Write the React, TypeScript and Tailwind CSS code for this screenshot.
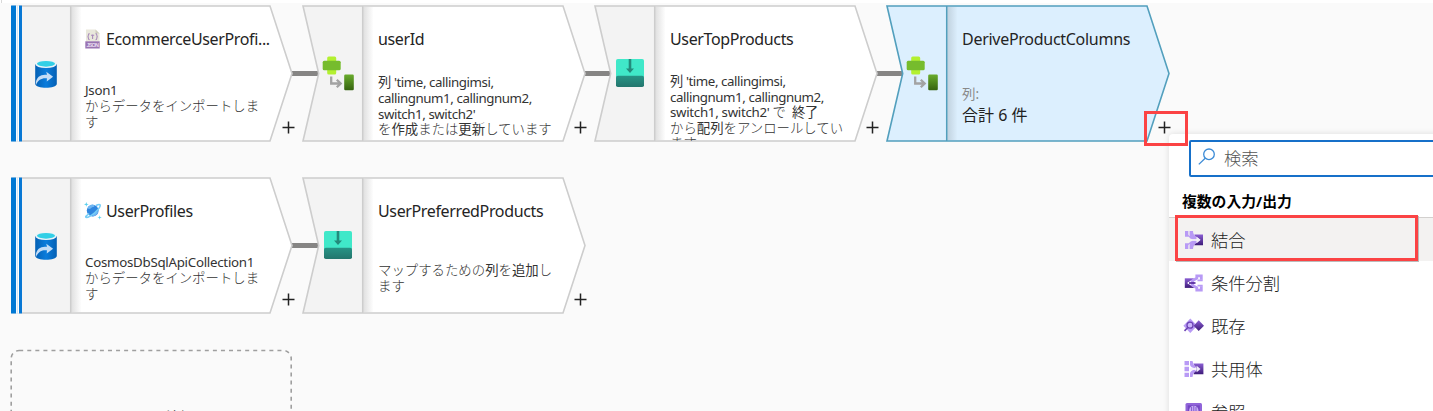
import type { ReactNode } from "react";

const FONT = "font-['Noto_Sans','Noto_Sans_CJK_JP',sans-serif]";

function SourceIcon() {
  return (
    <svg width="22" height="28" viewBox="0.8 0.3 22.4 28.6" preserveAspectRatio="none" className="mt-px">
      <defs>
        <linearGradient id="cyl" x1="0" x2="1">
          <stop offset="0" stopColor="#0460b4" />
          <stop offset=".5" stopColor="#0a7cdc" />
          <stop offset="1" stopColor="#0460b4" />
        </linearGradient>
      </defs>
      <path d="M1 4.5V24.5C1 30 23 30 23 24.5V4.5Z" fill="url(#cyl)" />
      <ellipse cx="12" cy="4.5" rx="11" ry="4" fill="#eaf3f8" />
      <ellipse cx="12" cy="4.2" rx="9.2" ry="2.9" fill="#32cfe6" />
      <path d="M1.7 23.5C2.2 17.5 7 14.5 13 15.4L12.3 12.2L19.2 17.3L12.8 22.3L12.9 19C8.5 18.3 4 20 1.7 26Z" fill="#c3dcf6" />
    </svg>
  );
}

function DeriveIcon() {
  return (
    <svg width="33" height="35" viewBox="0 0 33 35">
      <defs>
        <linearGradient id="dg" x1="0" x2="0" y1="0" y2="1">
          <stop offset="0" stopColor="#69ac2c" />
          <stop offset="1" stopColor="#35620f" />
        </linearGradient>
      </defs>
      <rect x="5.2" y="0.5" width="9" height="18" rx="1.5" fill="#b3f030" />
      <rect x="0.7" y="4.7" width="18" height="9.6" rx="1.5" fill="#76bc2d" />
      <path d="M9.2 20.5V27.5H18M14.8 23.7L18.7 27.5L14.8 31.3" fill="none" stroke="#a3a3a3" strokeWidth="2.3" />
      <rect x="22.2" y="18.5" width="9.6" height="15.8" rx="1.2" fill="url(#dg)" />
    </svg>
  );
}

function FlattenIcon() {
  return (
    <svg width="28" height="28" viewBox="0 0 28 28" className="mr-[2px]">
      <defs>
        <linearGradient id="fg" x1="0" x2="0" y1="0" y2="1">
          <stop offset="0" stopColor="#279486" />
          <stop offset="1" stopColor="#23766d" />
        </linearGradient>
      </defs>
      <rect width="28" height="20" rx="1.8" fill="#40e8c9" />
      <path d="M0 18.5Q0 16.7 1.8 16.7H26.2Q28 16.7 28 18.5V26.2Q28 28 26.2 28H1.8Q0 28 0 26.2Z" fill="url(#fg)" />
      <path d="M12.7 0H15.3V9.5H18L14 14L10 9.5H12.7Z" fill="#238b7c" />
    </svg>
  );
}

function JsonIcon() {
  return (
    <svg width="15" height="20" viewBox="0 0 15 20" className="ml-[1px] shrink-0">
      <path d="M1 .5H10.5L14.5 4.5V12.5H1Z" fill="#e9e8dc" />
      <path d="M10.5 .5L14.5 4.5H10.5Z" fill="#cfcdbd" />
      <rect x=".3" y="12.3" width="14.4" height="7.2" fill="#9a74b2" />
      <path d="M4.6 4.6Q3.4 4.6 3.4 6Q3.4 7.6 2.5 7.6Q3.4 7.6 3.4 9.2Q3.4 10.6 4.6 10.6M10.6 4.6Q11.8 4.6 11.8 6Q11.8 7.6 12.7 7.6Q11.8 7.6 11.8 9.2Q11.8 10.6 10.6 10.6M7.6 5.5V10M6 6.2H9.2" fill="none" stroke="#a98bbb" strokeWidth="1.1" />
      <text x="7.5" y="18" fontSize="5.5" fontWeight="700" textAnchor="middle" textLength="12" fill="#e9def0" fontFamily="Liberation Sans, sans-serif">JSON</text>
    </svg>
  );
}

function CosmosIcon() {
  return (
    <svg width="18" height="18" viewBox="0 0 18 18" className="shrink-0">
      <circle cx="8.7" cy="8.6" r="5.9" fill="#2f86df" />
      <path d="M3.3 6.2Q6 8 8 5.2Q11 5 10.3 2.9Q6 1.6 3.3 6.2ZM8.6 14.4Q8.5 10.5 14.2 9Q14 13.5 8.6 14.4Z" fill="#6fb6f2" />
      <path d="M5.2 11.7Q.8 14.6 2 15.3Q4.2 16.1 10.7 10.8Q17.2 5 16 2.8Q15.3 1.8 12 3.5" fill="none" stroke="#75cdf7" strokeWidth="1.6" />
      <path d="M2.3 0L2.9 1.8L4.7 2.4L2.9 3L2.3 4.8L1.7 3L0 2.4L1.7 1.8ZM15.7 13.2L16.2 15L17.8 15.5L16.2 16L15.7 17.7L15.2 16L13.5 15.5L15.2 15Z" fill="#59cfee" />
    </svg>
  );
}

function Plus() {
  return (
    <svg width="13" height="13" viewBox="0 0 13 13">
      <path d="M6.5 .5V12.5M.5 6.5H12.5" stroke="#222" strokeWidth="1.5" />
    </svg>
  );
}

type NodeProps = {
  place: string;
  icon: ReactNode;
  source?: boolean;
  selected?: boolean;
  linked?: boolean;
  title: ReactNode;
  children: ReactNode;
  bodyClass: string;
};

function FlowNode({ place, icon, source, selected, linked, title, children, bodyClass }: NodeProps) {
  const stroke = selected ? "#529fbd" : "#cdcdcd";
  const fill = selected ? "#dceffe" : "#ffffff";
  const side = selected ? "#dceffe" : "#f3f3f3";
  const outline = source ? "M3 1H260L282 68.5L260 136H3Z" : "M3 1H263L285 68.5L263 136H3L18.7 68.5Z";
  const sidePath = source ? "M3 1H60.7V136H3Z" : "M3 1H62.7V136H3L18.7 68.5Z";
  const dx = source ? 60.7 : 62.7;
  return (
    <div className={`absolute h-[137px] w-[300px] ${place}`}>
      <svg className="absolute left-0 top-0 overflow-visible" width="300" height="137" viewBox="0 0 300 137">
        <defs>
          <linearGradient id="shade" x1="0" x2="1">
            <stop offset="0" stopColor="#000" stopOpacity=".13" />
            <stop offset="1" stopColor="#000" stopOpacity="0" />
          </linearGradient>
        </defs>
        {linked && <path d={source ? "M282 68.5H309" : "M285 68.5H311"} stroke="#868584" strokeWidth="5" />}
        <path d={outline} fill={fill} />
        <path d={sidePath} fill={side} />
        <rect x={dx} y="2" width="11" height="133" fill="url(#shade)" />
        <path d={`M${dx} 1V136`} stroke={stroke} strokeWidth="1.5" />
        <path d={outline} fill="none" stroke={stroke} strokeWidth="1.6" />
        {source && (
          <g>
            <rect x="1" y="0.5" width="11" height="136" fill="#fff" />
            <rect x="1" y="0.5" width="5" height="136" fill="#0078d4" />
            <rect x="6.8" y="0.5" width="1" height="136" fill="#c7e0f4" />
            <rect x="9" y="0.5" width="3" height="136" fill="#0878d4" />
          </g>
        )}
      </svg>
      <div className="relative flex h-[136px] overflow-hidden">
        <div className={`flex shrink-0 items-center justify-center ${source ? "w-[62px] pl-[10px]" : "w-[64px] pl-[13px]"}`}>{icon}</div>
        <div className="relative flex flex-col">
          <div className={`mt-[24px] flex h-[20px] items-center whitespace-nowrap text-[16px] tracking-[-0.36px] text-[#242424] ${source ? "pl-[12px]" : "pl-[14px]"}`}>{title}</div>
          <div className={`flex flex-col whitespace-nowrap text-[13.3px] text-[#333] ${source ? "pl-[13px]" : "pl-[14px]"} ${bodyClass}`}>{children}</div>
        </div>
      </div>
      <div className={`absolute top-[116px] ${source ? "left-[272px]" : "left-[274px]"}`}>
        <Plus />
      </div>
    </div>
  );
}

function Purple() {
  return (
    <defs>
      <linearGradient id="pg" x1="0" x2="0" y1="0" y2="1">
        <stop offset="0" stopColor="#8b5fd3" />
        <stop offset="1" stopColor="#3d1a78" />
      </linearGradient>
    </defs>
  );
}

function JoinIcon() {
  return (
    <svg width="20" height="20" viewBox="0 0 20 20">
      <Purple />
      <path d="M1 1H4.3V4.5Q4.8 5.5 5.6 6.2V1H9Q9 4.6 12 6.6L13.4 7.8L12 9.3H8.5Q6 8.8 4.8 6.8H1ZM1 19H4.3V15.5Q4.8 14.5 5.6 13.8V19H9Q9 15.4 12 13.4L13.4 12.2L12 10.7H8.5Q6 11.2 4.8 13.2H1Z" fill="#b89af5" />
      <path d="M10.3 4.5H19V15.2H10.3Q10.7 13.8 12.8 12.7L16.5 9.8L12.8 7Q10.7 6.2 10.3 4.5Z" fill="url(#pg)" />
      <path d="M6 10H15M12.5 7.5L15.5 10L12.5 12.5" fill="none" stroke="#f3effb" strokeWidth="1.2" />
    </svg>
  );
}

function SplitIcon() {
  return (
    <svg width="20" height="20" viewBox="0 0 20 20">
      <Purple />
      <rect x=".8" y="5.3" width="9" height="9.6" fill="url(#pg)" />
      <path d="M14 6.3L6.5 10L14 13.7L14 16L3.5 10.6V9.4L14 4Z" fill="#fff" />
      <path d="M17.3 6.8V2.8H12.8V5.2L7 8.6M17.3 13.2V17.2H12.8V14.8L7 11.4" fill="none" stroke="#b89af5" strokeWidth="2.8" />
      <path d="M13.5 7.4H18.7M13.5 12.6H18.7" stroke="#b89af5" strokeWidth="1.6" />
      <path d="M5 10H11.5" stroke="#5f35a5" strokeWidth="1.8" />
    </svg>
  );
}

function ExistsIcon() {
  return (
    <svg width="21" height="20" viewBox="0 0 21 20">
      <Purple />
      <path d="M7.3 2.6L14.2 9.8L7.3 17L.4 9.8Z" fill="#b89af5" />
      <path d="M15.7 4.3L21 9.7L15.7 15L10.7 9.7Z" fill="url(#pg)" />
      <circle cx="7" cy="9.2" r="3" fill="#cbb5fa" stroke="#6b43b3" strokeWidth="1.3" />
      <path d="M4.8 11.5L1.5 14.9" stroke="#6b43b3" strokeWidth="1.6" />
    </svg>
  );
}

function UnionIcon() {
  return (
    <svg width="20" height="20" viewBox="0 0 20 20">
      <Purple />
      <path d="M.5 2H5V6.3H.5ZM.5 7.8H5V12.2H.5ZM.5 13.7H5V18H.5ZM6 2H8.5Q9 6 12 8L11 9.2Q7 8.8 6 6ZM6 18H8.5Q9 14 12 12L11 10.8Q7 11.2 6 14Z" fill="#b89af5" />
      <path d="M9.5 4.5H19.4V15.3H9.5Q10 13.5 12 12V8Q10 6.5 9.5 4.5Z" fill="url(#pg)" />
      <path d="M6 10H15M12.5 7.6L15.4 10L12.5 12.4" fill="none" stroke="#f3effb" strokeWidth="1.4" />
    </svg>
  );
}

function LookupIcon() {
  return (
    <svg width="20" height="20" viewBox="0 0 20 20">
      <rect x="1.5" y="1" width="16.5" height="17" rx="1.5" fill="#9064d9" />
      <rect x="3.8" y="3.3" width="12" height="13" fill="#7546c3" />
      <circle cx="9.8" cy="8.5" r="4.7" fill="#c8b1f5" />
      <path d="M9.8 3.8V14M7.6 5V13M12 5V13" stroke="#8558cf" strokeWidth="1" />
    </svg>
  );
}

const items = [
  { icon: <JoinIcon />, label: "結合", row: "bg-[#f3f2f1]" },
  { icon: <SplitIcon />, label: "条件分割", row: "" },
  { icon: <ExistsIcon />, label: "既存", row: "" },
  { icon: <UnionIcon />, label: "共用体", row: "" },
  { icon: <LookupIcon />, label: "参照", row: "" },
];

const importText = (
  <>
    <span className="text-[13.4px] leading-[16px] font-light">からデータをインポートしま</span>
    <span className="text-[13.4px] leading-[16px] font-light">す</span>
  </>
);

function Kana({ children }: { children: ReactNode }) {
  return <span className="font-light">{children}</span>;
}

export default function App() {
  return (
    <div className={`relative h-[411px] w-[1433px] overflow-hidden bg-[#fafafa] ${FONT}`}>
      <div className="h-[3px] bg-white">
        <div className="ml-px h-[3px] w-px bg-[#d8d8d8]" />
      </div>

      <FlowNode
        place="left-[10px] top-[5px]"
        source
        linked
        icon={<SourceIcon />}
        title={<><JsonIcon /><span className="ml-[6px]">EcommerceUserProfi...</span></>}
        bodyClass="mt-[33px] leading-[16px]"
      >
        <span className="tracking-[-0.3px]">Json1</span>
        {importText}
      </FlowNode>
      <FlowNode place="left-[300px] top-[5px]" linked icon={<DeriveIcon />} title="userId" bodyClass="mt-[26px] leading-[15.8px]">
        <span className="tracking-[-0.43px]">列 'time, callingimsi,</span>
        <span className="tracking-[-0.43px]">callingnum1, callingnum2,</span>
        <span className="tracking-[-0.43px]">switch1, switch2'</span>
        <span className="text-[13.4px]"><Kana>を</Kana>作成<Kana>または</Kana>更新<Kana>しています</Kana></span>
      </FlowNode>
      <FlowNode place="left-[592px] top-[5px]" linked icon={<FlattenIcon />} title="UserTopProducts" bodyClass="mt-[25px] leading-[15.6px]">
        <span className="tracking-[-0.43px]">列 'time, callingimsi,</span>
        <span className="tracking-[-0.43px]">callingnum1, callingnum2,</span>
        <span className="whitespace-pre tracking-[-0.3px]">switch1, switch2' <Kana>で</Kana>{"  "}終了</span>
        <span className="text-[13.4px]"><Kana>から</Kana>配列<Kana>をアンロールしてい</Kana></span>
        <span className="text-[13.4px] font-light">ます</span>
      </FlowNode>
      <FlowNode
        place="left-[884px] top-[5px]"
        selected
        icon={<DeriveIcon />}
        title={<span className="tracking-[-0.28px]">DeriveProductColumns</span>}
        bodyClass="mt-[35px]"
      >
        <span className="text-[13.5px] leading-[20px] text-[#888]">列:</span>
        <span className="text-[16px] leading-[22px] text-[#222]">合計 6 件</span>
      </FlowNode>
      <FlowNode
        place="left-[10px] top-[177px]"
        source
        linked
        icon={<SourceIcon />}
        title={<><CosmosIcon /><span className="ml-[4px]">UserProfiles</span></>}
        bodyClass="mt-[33px] leading-[16px]"
      >
        <span className="tracking-[-0.27px]">CosmosDbSqlApiCollection1</span>
        {importText}
      </FlowNode>
      <FlowNode place="left-[300px] top-[177px]" icon={<FlattenIcon />} title="UserPreferredProducts" bodyClass="mt-[41px] leading-[16px]">
        <span className="text-[13.4px]"><Kana>マップするための</Kana>列<Kana>を</Kana>追加<Kana>し</Kana></span>
        <span className="text-[13.4px] font-light">ます</span>
      </FlowNode>

      <div className="absolute left-[10px] top-[349px] h-[100px] w-[283px]">
        <svg className="absolute left-0 top-0" width="283" height="100">
          <rect x="1.2" y="1.5" width="280" height="120" rx="8" fill="none" stroke="#9f9f9f" strokeWidth="1.6" strokeDasharray="4 4.07" />
        </svg>
        <div className="pl-[5px] pt-[57px] text-center text-[13px] leading-[20px] text-[#555]">ソースの追加</div>
      </div>

      <div className="absolute left-[1169px] top-[134px] h-[300px] w-[290px] rounded bg-white shadow-[0_0_6px_rgba(0,0,0,0.12)]">
        <div className="ml-[20px] mt-[6px] flex h-[37px] items-center rounded-[2px] border-2 border-[#1670c9] pl-[7px]">
          <svg width="18" height="18" viewBox="0 0 18 18" className="mb-[3px]">
            <circle cx="11" cy="6.3" r="5.3" fill="none" stroke="#3c8bd6" strokeWidth="1.3" />
            <path d="M7.2 10.2L.8 16.4" stroke="#3c8bd6" strokeWidth="1.3" />
          </svg>
          <span className="ml-[8px] text-[17.3px] leading-[24px] font-light text-[#555]">検索</span>
        </div>
        <div className="ml-[13px] mt-[14px] h-[20px] text-[14.8px] leading-[20px] font-bold text-black">複数の入力/出力</div>
        <div className="mt-[6px] border-t border-[#d2d0ce]">
          {items.map((it) => (
            <div key={it.label} className={`flex h-[43px] items-center pl-[14px] pt-[2px] ${it.row}`}>
              <div className="flex w-[21px] justify-center pb-[2px]">{it.icon}</div>
              <span className="ml-[7px] text-[17.3px] leading-[24px] font-light text-[#222]">{it.label}</span>
            </div>
          ))}
        </div>
      </div>

      <div className="absolute left-[1144px] top-[111px] h-[35px] w-[44px] border-3 border-[#fb4344]" />
      <div className="absolute left-[1175px] top-[215px] h-[46px] w-[243px] border-3 border-[#fb4344] shadow-[1px_1px_0_#bbb]" />
    </div>
  );
}
